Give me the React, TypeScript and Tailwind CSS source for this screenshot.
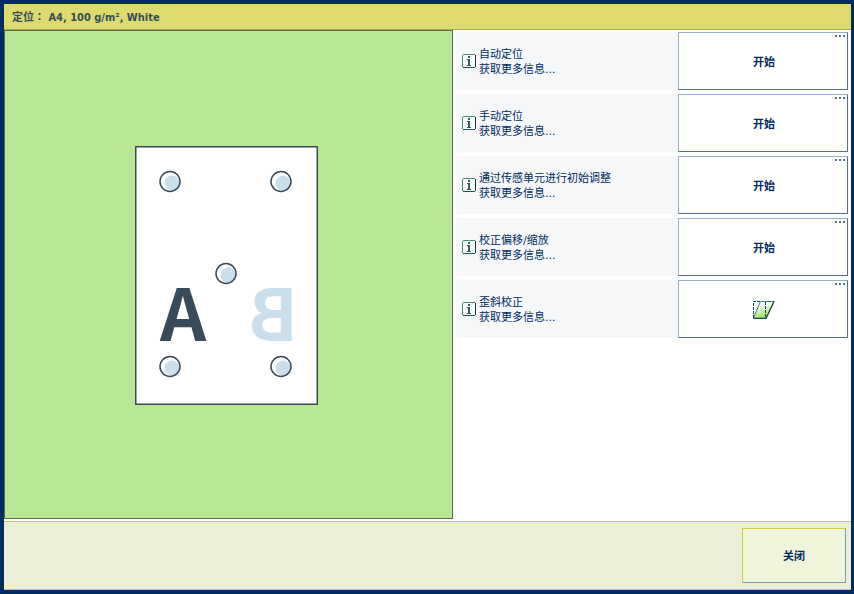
type Row = { title: string; action: string; icon?: boolean };

const rows: Row[] = [
    { title: "自动定位", action: "开始" },
    { title: "手动定位", action: "开始" },
    { title: "通过传感单元进行初始调整", action: "开始" },
    { title: "校正偏移/缩放", action: "开始" },
    { title: "歪斜校正", action: "歪斜校正", icon: true },
];

const marks = [
    [35, 35],
    [146, 35],
    [91, 127],
    [35, 220],
    [146, 220],
];

function InfoIcon() {
    return (
        <svg width="14" height="14" viewBox="0 0 14 14" className="shrink-0" aria-hidden="true">
            <rect x="1" y="1" width="12" height="12" fill="#fbfcfc" />
            <path d="M1 .5H13M.5 1V13" stroke="#4a8f70" />
            <path d="M13.5 1V13" stroke="#1c2f45" />
            <path d="M1 13.5H13" stroke="#1d5560" />
            <path d="M6 2h2v2H6zM5 5h3v6h1v1H5v-1h1V6H5z" fill="#2f6354" />
        </svg>
    );
}

function SkewIcon() {
    return (
        <svg width="22" height="18" viewBox="0 0 22 18" aria-hidden="true">
            <defs>
                <linearGradient id="skew" x1="0.3" y1="0" x2="0.7" y2="1">
                    <stop offset="0.2" stopColor="#ffffff" />
                    <stop offset="0.9" stopColor="#92dc5c" />
                </linearGradient>
            </defs>
            <path d="M8 .5H21L13 17.5H.5Z" fill="url(#skew)" />
            <path d="M7.5 .5L.5 17" stroke="#3f8068" fill="none" />
            <path d="M8 .5H21.5" stroke="#3f8068" />
            <path d="M21 .5L13 17.5H.5" stroke="#173f50" fill="none" strokeWidth="1.3" />
            <path d="M.5 17V.5H8M12.5 1V17" stroke="#173f50" fill="none" strokeDasharray="3 1" />
        </svg>
    );
}

function Paper() {
    return (
        <svg width="183" height="259" viewBox="0 0 183 259" role="img" aria-label="A B">
            <rect x="0.75" y="0.75" width="181.5" height="257.5" fill="#fff" stroke="#384b5a" strokeWidth="1.5" />
            {marks.map(([x, y]) => (
                <g key={`${x}-${y}`}>
                    <circle cx={x + 2} cy={y + 2} r="7.5" fill="#cbdeeb" />
                    <circle cx={x} cy={y + 0.5} r="10" fill="none" stroke="#384b5a" strokeWidth="1.5" />
                </g>
            ))}
            <text x="48" y="195" textAnchor="middle" fontSize="72" fontWeight="700" fill="#384b5a" className="font-['Noto_Sans_CJK_SC',sans-serif]">
                A
            </text>
            <g transform="translate(163 0) scale(-1 1)">
                <text x="0" y="195" fontSize="72" fontWeight="700" fill="#cbdeeb" className="font-['Noto_Sans_CJK_SC',sans-serif]">
                    B
                </text>
            </g>
        </svg>
    );
}

export default function App() {
    return (
        <div className="flex min-h-screen flex-col border-4 border-r-3 border-[#002c5f] bg-[#fffffd] font-['DejaVu_Sans','Noto_Sans_CJK_SC',sans-serif] text-[11px] leading-[15px] text-[#002c5f]">
            <header className="border-b border-[#a9a655] bg-[#dddb6d] px-2 pt-1.5 pb-1">
                <h1 className="font-['DejaVu_Sans_Condensed','Noto_Sans_CJK_TC',sans-serif] font-bold text-[#384b5a]">定位： A4, 100 g/m², White</h1>
            </header>

            <main className="grid grow grid-cols-[449fr_398fr]">
                <section className="mb-0.5 flex items-center justify-center border border-[#55704a] bg-[#b8e795] pt-0.5 pr-1">
                    <Paper />
                </section>

                <section className="flex flex-col gap-1 px-[3px] pt-0.5">
                    {rows.map((row) => (
                        <div key={row.title} className="grid h-[58px] grid-cols-[222fr_170fr]">
                            <div className="flex items-center gap-[3px] bg-[#f5f7f9] pl-1.5">
                                <InfoIcon />
                                <div className="pt-0.5">
                                    <p>{row.title}</p>
                                    <a href="#info" className="block">获取更多信息...</a>
                                </div>
                            </div>
                            <button
                                type="button"
                                aria-label={row.icon ? row.action : undefined}
                                className="relative flex items-center justify-center border border-t-[#9bb0c9] border-r-[#56708f] border-b-[#56708f] border-l-[#9bb0c9] bg-[#fffffd] pt-0.5 pl-0.5 font-bold"
                            >
                                {row.icon ? <SkewIcon /> : row.action}
                                <span className="absolute top-0.5 right-0.5 flex gap-0.5">
                                    <span className="size-0.5 bg-[#56708f]" />
                                    <span className="size-0.5 bg-[#56708f]" />
                                    <span className="size-0.5 bg-[#56708f]" />
                                </span>
                            </button>
                        </div>
                    ))}
                </section>
            </main>

            <footer className="flex justify-end border-y border-[#c5c568] bg-[#ebefd8] px-[5px] py-1.5">
                <button
                    type="button"
                    className="h-[55px] w-[104px] border border-t-[#d0cb40] border-r-[#7a9cb8] border-b-[#7a9cb8] border-l-[#d0cb40] bg-[#f0f4da] pt-0.5 font-bold"
                >
                    关闭
                </button>
            </footer>
        </div>
    );
}
